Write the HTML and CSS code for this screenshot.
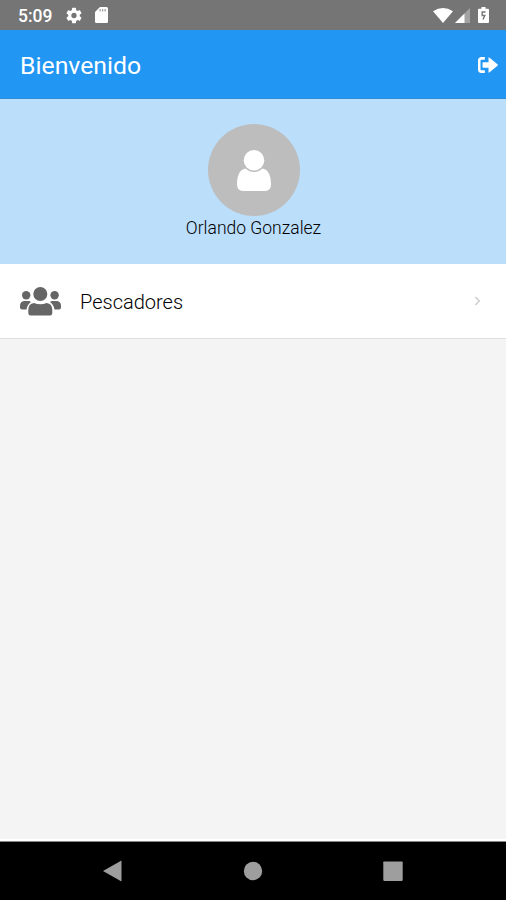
FILE: index.html
```html
<!DOCTYPE html>
<html lang="es">
<head>
<meta charset="utf-8">
<title>Bienvenido</title>
<link rel="stylesheet" href="styles.css">
</head>
<body>
<div class="screen">
  <div class="status">
    <span class="clock">5:09</span>
    <svg class="gear" viewBox="2 2 20 20"><path fill-rule="evenodd" d="M19.14 12.94a7 7 0 0 0 0-1.88l2.03-1.58a.5.5 0 0 0 .12-.61l-1.92-3.32a.5.5 0 0 0-.59-.22l-2.39.96a7 7 0 0 0-1.62-.94l-.36-2.54a.5.5 0 0 0-.48-.41h-3.84a.5.5 0 0 0-.48.41l-.36 2.54a7 7 0 0 0-1.62.94l-2.39-.96a.5.5 0 0 0-.59.22L2.74 8.87a.5.5 0 0 0 .12.61l2.03 1.58a7 7 0 0 0 0 1.88l-2.03 1.58a.5.5 0 0 0-.12.61l1.92 3.32a.5.5 0 0 0 .59.22l2.39-.96a7 7 0 0 0 1.62.94l.36 2.54a.5.5 0 0 0 .48.41h3.84a.5.5 0 0 0 .48-.41l.36-2.54a7 7 0 0 0 1.62-.94l2.39.96a.5.5 0 0 0 .59-.22l1.92-3.32a.5.5 0 0 0-.12-.61zM12 15.3a3.3 3.3 0 1 1 0-6.600 3.3 3.3 0 0 1 0 6.600z"/></svg>
    <svg class="sd" viewBox="0 0 13 16"><path d="M5 0h6.500a1.500 1.500 0 0 1 1.500 1.500v13a1.500 1.500 0 0 1-1.500 1.500h-10a1.500 1.500 0 0 1-1.500-1.500V5z"/><path class="pins" d="M4.500 2h1.200v2.500H4.500zM7 2h1.200v2.500H7zM9.500 2h1.200v2.500H9.500z"/></svg>
    <svg class="wifi" viewBox="0 0 20 15"><path d="M0 3.200Q10-3.200 20 3.200L10 15z"/></svg>
    <svg class="signal" viewBox="0 0 15 15"><path class="dim" d="M15 0v15H0z"/><path d="M9.500 5.500V15H0z"/></svg>
    <svg class="battery" viewBox="0 0 11 16"><path d="M3.500 0h4v1.700H10a1 1 0 0 1 1 1V15a1 1 0 0 1-1 1H1a1 1 0 0 1-1-1V2.700a1 1 0 0 1 1-1h2.500z"/><path class="bolt" d="M7.500 5H4.200v3.500h2.600L5 12.500"/></svg>
  </div>
  <header class="bar">
    <h1>Bienvenido</h1>
    <svg class="exit" viewBox="0 0 19 15"><path class="door" d="M6.500 1.200H3.200a2 2 0 0 0-2 2v8.600a2 2 0 0 0 2 2h3.300"/><path d="M5 5h5V.8q0-1 1-.3l7.500 6.300q.7.700 0 1.400L11 14.500q-1 .7-1-.3V10H5q-.7 0-.7-.7V5.700Q4.300 5 5 5z"/></svg>
  </header>
  <section class="profile">
    <div class="avatar">
      <svg viewBox="0 0 34 41"><path d="M8.500 18.500Q12.500 22 17 22t8.500-3.500C32 19.500 34 27 34 34.500q0 6.500-6 6.500H6q-6 0-6-6.500C0 27 2 19.500 8.500 18.500z"/><circle cx="17" cy="10.300" r="10.300"/></svg>
    </div>
    <div class="name">Orlando Gonzalez</div>
  </section>
  <div class="item">
    <svg class="group" viewBox="0 0 41 29"><circle cx="20.300" cy="7" r="7"/><circle cx="6.200" cy="8.300" r="4.200"/><circle cx="34.600" cy="8.300" r="4.200"/><path d="M14 16q6.300 2.500 12.600 0 5.700.7 5.700 7v3q0 2.500-2.300 2.500H10.600q-2.300 0-2.300-2.500v-3q0-6.300 5.700-7z"/><path d="M4 14h4.500q1.500.2 2.500 1-3.800 2.600-4.500 7.500H2q-2 0-2-2V19q0-4.500 4-5zM37 14h-4.500q-1.500.2-2.500 1 3.800 2.600 4.500 7.500H39q2 0 2-2V19q0-4.500-4-5z"/></svg>
    <span class="label">Pescadores</span>
    <svg class="chevron" viewBox="0 0 7 10"><path d="M1.300 1l4 4-4 4"/></svg>
  </div>
  <main class="body"></main>
  <nav class="nav">
    <svg viewBox="0 0 20 22"><path d="M0 11L18.500.5v21z"/></svg>
    <svg viewBox="0 0 20 22"><circle cx="10" cy="11" r="9.200"/></svg>
    <svg viewBox="0 0 20 22"><rect x=".3" y="1.500" width="19.400" height="19.400" rx=".8"/></svg>
  </nav>
</div>
</body>
</html>
```

FILE: styles.css
```css
* { box-sizing: border-box; }
body { margin: 0; font-family: Roboto, "Liberation Sans", sans-serif; }
svg { display: block; flex: none; fill: #fff; }
.screen { display: flex; flex-direction: column; height: 900px; background: #f4f4f4; }
.status { display: flex; align-items: center; height: 30px; padding: 0 17px 0 18px; background: #757575; color: #fff; }
.clock { width: 48px; font-size: 17.5px; font-weight: 500; line-height: 20px; padding-top: 1px; }
.gear { width: 16px; height: 17px; }
.sd { width: 13px; height: 16px; margin-left: 13px; }
.pins { fill: #999; }
.wifi { width: 20px; height: 15px; margin-left: auto; }
.signal { width: 15px; height: 15px; margin-left: 2px; }
.dim { fill: #a3a3a3; }
.battery { width: 11px; height: 16px; margin-left: 8px; }
.bolt { fill: none; stroke: #757575; stroke-width: 1.4; }
.bar { display: flex; align-items: center; justify-content: space-between; height: 69px; padding: 0 8px 0 20px; background: #2196f3; border-bottom: 1px solid #2e8edc; color: #fff; }
.bar h1 { margin: 3px 0 0; font-size: 24.8px; font-weight: 400; line-height: 30px; }
.exit { width: 20px; height: 16px; margin-top: 1px; }
.door { fill: none; stroke: #fff; stroke-width: 2.4; }
.profile { display: flex; flex-direction: column; align-items: center; height: 165px; padding: 25px 0 0 1px; background: #bbdefb; }
.avatar { display: flex; align-items: center; justify-content: center; width: 92px; height: 92px; border-radius: 50%; background: #bdbdbd; }
.avatar svg { width: 34px; height: 41px; }
.name { margin-top: 1px; font-size: 17.5px; font-weight: 300; line-height: 22px; color: #000; }
.item { display: flex; align-items: center; height: 75px; padding: 0 25px 0 20px; background: #fff; border-bottom: 1px solid #dedede; }
.group { width: 41px; height: 29px; fill: #666; }
.label { margin: 2px 0 0 19px; font-size: 20px; font-weight: 300; line-height: 24px; color: #000; }
.chevron { width: 7px; height: 10px; margin-left: auto; fill: none; stroke: #d0d0d0; stroke-width: 1.6; }
.body { flex: 1; border-bottom: 2px solid #fff; }
.nav { display: flex; align-items: center; justify-content: center; gap: 120px; height: 59px; background: #000; border-top: 1px solid #888; }
.nav svg { width: 20px; height: 22px; margin-bottom: 1px; fill: #9e9e9e; }
```
